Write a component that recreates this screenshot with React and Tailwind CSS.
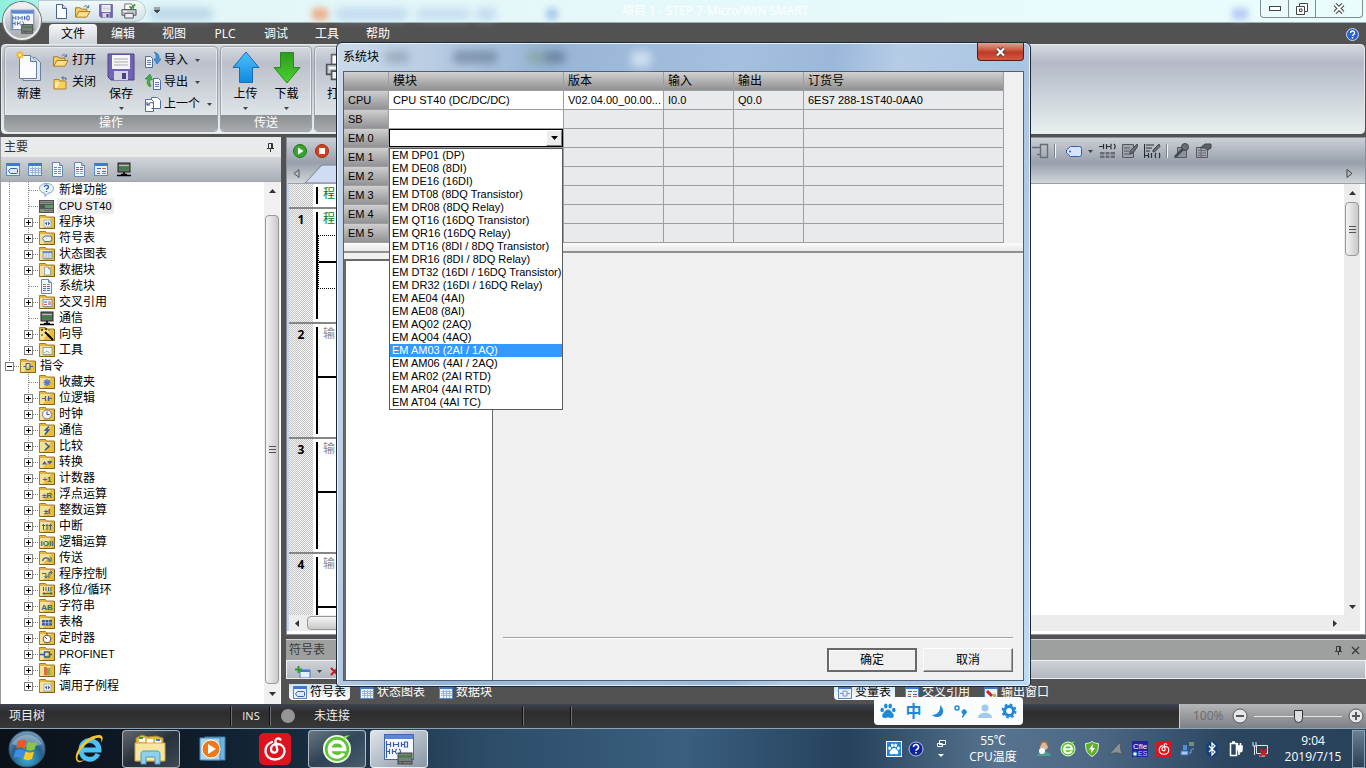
import { useState } from "react";

const uiFont = "[font-family:'Open_Sans','Noto_Sans_CJK_SC',sans-serif]";
const sansFont = "[font-family:'Liberation_Sans','Noto_Sans_CJK_SC',sans-serif]";

/* ---------- small icons ---------- */
const Svg = ({ w = 16, h = 16, box, children, className = "" }) => (
  <svg
    width={w}
    height={h}
    viewBox={box || `0 0 ${w} ${h}`}
    fill="none"
    className={`shrink-0 ${className}`}
    aria-hidden="true"
  >
    {children}
  </svg>
);

const Caret = ({ color = "#444", className }) => (
  <Svg w={5} h={3} className={className}>
    <path d="M0 0h5L2.5 3z" fill={color} />
  </Svg>
);

const SheetFrame = ({ children }) => (
  <Svg w={15} h={15} box="0 0 15 15">
    <rect x=".5" y="1.5" width="13" height="12" fill="#e9f1fb" stroke="#5c86c4" />
    <rect x="1" y="1" width="13" height="3" fill="#3f79d6" />
    {children}
  </Svg>
);

const SymbolIcon = () => (
  <SheetFrame>
    <path d="M4.5 6.5h6a1 1 0 0 1 1 1v3a1 1 0 0 1-1 1h-6L2.5 9z" fill="#dfe9fa" stroke="#3a62a8" />
  </SheetFrame>
);
const ChartIcon = () => (
  <SheetFrame>
    <path d="M2 6.5h11M2 8.5h11M2 10.5h11M4.500 5v8M7.500 5v8M10.500 5v8" stroke="#8fa9d3" strokeWidth=".8" />
  </SheetFrame>
);
const XrefIcon = () => (
  <SheetFrame>
    <path d="M3 6.500h4M8 9.500h4M3 11.500h3" stroke="#3b64c4" strokeWidth="1.200" />
    <path d="M8 6.500h4M3 9.500h3M8 11.500h4" stroke="#d9703c" strokeWidth="1.200" />
  </SheetFrame>
);
const PageIcon = ({ a = "#6f87b5", b = "#6f87b5", c = "#6f87b5" }) => (
  <Svg w={15} h={15}>
    <path d="M2.500.5h7l3 3v11h-10z" fill="#f4f8fe" stroke="#6e86ae" />
    <path d="M9.500.5v3h3" fill="#bccbe5" stroke="#6e86ae" />
    <path d="M4 5.500h3M8 5.500h3" stroke={a} />
    <path d="M4 7.500h3M8 7.500h3" stroke={b} />
    <path d="M4 9.500h3M8 9.500h3M4 11.500h3M8 11.500h3" stroke={c} />
  </Svg>
);
const PlcIcon = () => (
  <Svg w={16} h={15}>
    <rect x="2" y="1" width="12" height="9" fill="#6b6f6b" stroke="#222" />
    <rect x="3" y="3" width="10" height="1" fill="#b8bcb8" />
    <rect x="3" y="5" width="10" height="3" fill="#3d7f45" />
    <path d="M8 10v3M1 13.500h14M5 12.500h6" stroke="#000" strokeWidth="1.500" />
  </Svg>
);
const CpuIcon = () => (
  <Svg w={15} h={13}>
    <rect x=".5" y=".5" width="14" height="12" fill="#8d918d" stroke="#4e524e" />
    <rect x="1" y="4" width="13" height="5" fill="#4a5a4c" />
    <rect x="6" y="5" width="8" height="3" fill="#5f9a64" />
    <path d="M1 2.500h13M5 10.500h9" stroke="#6a6e6a" />
  </Svg>
);
const HelpBubble = () => (
  <Svg w={15} h={14}>
    <path d="M7.500.5c4 0 7 2 7 4.800S12 10 9 10.300L6 13.500v-3.200C3 10 .5 8 .5 5.300S3.500.5 7.500.5z" fill="#eef4fb" stroke="#7d9dc0" />
    <path d="M5.500 4a2 1.800 0 1 1 2.800 1.600c-.6.300-.8.600-.8 1.200M7.500 8v1" stroke="#2a5fb0" strokeWidth="1.400" />
  </Svg>
);

const folderGlyphs = {
  program: (
    <>
      <path d="M5 5h7v7H5z" fill="#e6ebf5" stroke="#9aa7bf" strokeWidth=".7" />
      <path d="M6 8.500h1M7.500 7v3M9.500 7v3M10 8.500h1" stroke="#47629a" />
    </>
  ),
  symbol: <path d="M5.500 5h5.200a2 2 0 0 1 2 2v1.500a2 2 0 0 1-2 2H5.500L3.500 7.800z" fill="#e9effb" stroke="#4c70b2" />,
  chart: (
    <>
      <rect x="4" y="4.500" width="9" height="7" fill="#f0f4fb" stroke="#6683b8" strokeWidth=".8" />
      <path d="M4 5.500h9" stroke="#5d8add" strokeWidth="1.500" />
      <path d="M4 8h9M4 10h9M7 6v5M10 6v5" stroke="#9db4d8" strokeWidth=".7" />
    </>
  ),
  data: <path d="M5.500 4h4l2 2v6h-6zM9.500 4v2h2" fill="#f0f3f8" stroke="#8b97ae" strokeWidth=".8" />,
  xref: (
    <>
      <rect x="4" y="4.500" width="9" height="7" fill="#eef1fb" stroke="#6683b8" strokeWidth=".8" />
      <path d="M5 7h3M9 9h3" stroke="#3b64c4" />
      <path d="M9 7h3M5 9.500h3" stroke="#d9605c" />
    </>
  ),
  tools: (
    <>
      <rect x="4" y="4.500" width="9" height="7" fill="#f2f7fa" stroke="#7a93a4" strokeWidth=".8" />
      <path d="M5 10l3-2 3 2" stroke="#9ab0bd" />
    </>
  ),
  wand: (
    <>
      <path d="M6 5l8 8" stroke="#000" strokeWidth="2" />
      <path d="M3 2v2M2 3h2M7 1v2M6 2h2M3 7v2M10 3v1" stroke="#000" strokeWidth=".8" />
    </>
  ),
  box: <path d="M6 4.500h4v6H6zM3.500 7.500H6M10 7.500h3" stroke="#3b5fa0" />,
  star: <path d="M8 4v7M4.500 7.500h7M5.500 5l5 5M10.500 5l-5 5" stroke="#4f76d8" strokeWidth="1.300" />,
  bit: <path d="M3 7.500h3M6.500 5v5M9.500 5v5M10 7.500h3" stroke="#3b5fa0" strokeWidth="1.200" />,
  clock: (
    <>
      <circle cx="8" cy="7.500" r="4.500" fill="#f2f2fa" stroke="#77779c" />
      <path d="M8 4.500v3h2.500" stroke="#4a4a78" />
    </>
  ),
  bolt: <path d="M10 3.500L6.500 7h3L6 11.500" stroke="#2f5aa6" strokeWidth="1.600" />,
  compare: <path d="M6 4l4 3.500L6 11" stroke="#2f5aa6" strokeWidth="1.500" />,
  convert: <path d="M3 9.500L5.500 6 8 9.500zM8 6h5.500L10.700 9.500z" fill="#3b5fa0" />,
  interrupt: <path d="M4.500 11V5M3 6.500h3M8 11V5M6.500 6.500h3M11.500 11V5M10 6.500h3" stroke="#3b5fa0" />,
  move: <path d="M3.500 10c1-4 5-4 7-1M12 6.500v3.500H8.500" stroke="#3b5fa0" strokeWidth="1.200" />,
  flow: <path d="M3 6.500h4v4M5.500 9L7 11l1.500-2M10 11V5.500h3M11.500 3.500L13 5.500l-1.500 2" stroke="#3b5fa0" />,
  shift: <path d="M4.500 4v4M7 4v4M9.500 4v4M12 4v4M4 10.500h9M5.500 9L4 10.500 5.500 12M11.500 9l1.500 1.500-1.500 1.500" stroke="#3b5fa0" />,
  table: (
    <>
      <rect x="3" y="5" width="10" height="5.500" fill="#36589a" />
      <path d="M3 7.700h10M6.300 5v5.500M9.700 5v5.500" stroke="#b9c6e0" strokeWidth=".8" />
    </>
  ),
  timer: (
    <>
      <circle cx="8" cy="8" r="3.800" fill="#fff" stroke="#555" />
      <path d="M8 8L6 6M7 3h2" stroke="#b22" />
    </>
  ),
  net: <path d="M1 7.500h4M5.500 5h5v5h-5zM10.500 7.500H13" stroke="#2f5aa6" strokeWidth="1.300" />,
  books: (
    <>
      <path d="M5 4h3v8H5z" fill="#d9704c" />
      <path d="M8 5h3v7H8z" fill="#7fae5a" />
      <path d="M11 4h2v8h-2z" fill="#d9b24c" />
    </>
  ),
};

const FolderIcon = ({ glyph, label }) => (
  <Svg w={16} h={14} box="0 0 16 14">
    <path d="M.5 2.500V.5h6L7.500 2h8v11.500H.5z" fill="#e2b83c" stroke="#a07e28" />
    <path d="M1 3h14v10H1z" fill="#e8bd3a" />
    <path d="M1 3h11L4 13H1z" fill="#f5e296" />
    <path d="M15.500 2.500v11H.5" stroke="#7d6218" />
    {glyph && folderGlyphs[glyph]}
    {label && (
      <text x="8" y="11" textAnchor="middle" fontSize="8" fontWeight="700" fill="#3b5fa0" fontFamily="Liberation Sans">
        {label}
      </text>
    )}
  </Svg>
);

const StepIcon = ({ size = 32 }) => (
  <Svg w={size} h={size} box="0 0 32 32">
    <rect x="1.500" y="1.500" width="29" height="25" fill="#f4f7fd" stroke="#4567a8" />
    <rect x="2" y="2" width="28" height="4" fill="#5b86d8" />
    <path d="M3.500 8v17M3 11.500h4M7.500 9v5M10.500 9v5M11 11.500h4M15.500 9v5M18.500 9v5M19 11.500h2M21.500 9h3v5h-3zM3 18.500h3M6.500 16v5M9.500 16v5M10 18.500h2M14 16c-2 1-2 4 0 5M16 16c2 1 2 4 0 5" stroke="#3a5ea6" strokeWidth="1.200" />
    <rect x="15" y="20" width="14" height="11" fill="#7c807c" stroke="#3f423f" />
    <path d="M16 23.500h12" stroke="#3d7f45" strokeWidth="2" />
    <path d="M16 28.500h12M19.500 28v3" stroke="#4d504d" />
  </Svg>
);

const NewDocIcon = () => (
  <Svg w={12} h={15}>
    <path d="M1.500.5h6l4 4v10h-10z" fill="#fff" stroke="#47618c" />
    <path d="M7.500.5v4h4" fill="#c4d4ea" stroke="#47618c" />
  </Svg>
);
const OpenIcon = () => (
  <Svg w={16} h={15} box="0 0 17 15">
    <path d="M.5 13.500v-10h5l1 1.500h6v3" fill="#f3cf6b" stroke="#a8761c" />
    <path d="M1 13.500L4 7.500h12l-3.500 6z" fill="#ffe08a" stroke="#a8761c" />
    <path d="M9 3c2-2.500 4-2 5 0M14.500.8V3.500H12" stroke="#4a6a9c" />
  </Svg>
);
const CloseFolderIcon = () => (
  <Svg w={16} h={15}>
    <path d="M1 4.500h5L7 6h6v8H1z" fill="#f6cf5c" stroke="#b5831f" />
    <path d="M2 7h5l-3 6H2z" fill="#fce9a8" />
    <path d="M13 5V3H9M10.500 1.200L8.700 3l1.800 1.700" stroke="#44619a" />
  </Svg>
);
const SaveIcon = ({ size = 14 }) => (
  <Svg w={size} h={size} box="0 0 28 28">
    <path d="M1 1h26v26H4l-3-3z" fill="#7264b4" stroke="#4a3f88" />
    <rect x="5" y="2" width="18" height="14" fill="#f6f6f6" />
    <path d="M7 6h14M7 9h14M7 12h14" stroke="#aaa" />
    <rect x="7" y="18" width="14" height="9" fill="#d5d5dc" />
    <rect x="15" y="20" width="4" height="6" fill="#4a3f88" />
  </Svg>
);
const PrintIcon = ({ size = 17 }) => (
  <Svg w={size} h={size} box="0 0 17 17">
    <path d="M4 1h7l2 3v3H4z" fill="#fff" stroke="#667" />
    <path d="M1 7h15v6H1z" fill="#c3c6cb" stroke="#4d5258" />
    <path d="M4 11h9v5H4z" fill="#eef0f3" stroke="#4d5258" />
    <path d="M2.500 9h4" stroke="#fff" />
    <path d="M9 3.500l2 2 4-4" stroke="#3a9a2c" strokeWidth="2" />
  </Svg>
);
const BigNewIcon = () => (
  <Svg w={26} h={32}>
    <path d="M7 6.500h12l5.500 5v18H7z" fill="#dfe8f3" stroke="#6b7f9c" />
    <path d="M3.500 4.500h11l6 6v17h-17z" fill="#fbfcfe" stroke="#6b7f9c" />
    <path d="M14.500 4.500v6h6" fill="#c9d7e8" stroke="#6b7f9c" />
    <path d="M4 0v8M0 4h8M1 1l6 6M7 1L1 7" stroke="#f2b21a" strokeWidth="1.300" />
    <circle cx="4" cy="4" r="1.500" fill="#fff6b0" />
  </Svg>
);
const ImportIcon = ({ out }) => (
  <Svg w={16} h={16}>
    <g transform={out ? "translate(8 4)" : "translate(0 4)"}>
      <path d="M.5.5h5l2 2v9h-7z" fill="#f5f8fd" stroke="#50709f" />
      <path d="M2 4.500h4M2 6.500h4M2 8.500h4" stroke="#5d80b4" />
    </g>
    {out ? (
      <path d="M5 13C2 11 1.500 8 3 5H0l5-5 2.500 6-2-.500c-1 2-1 4 .500 6z" fill="#3fb04e" stroke="#2a7f38" strokeWidth=".6" />
    ) : (
      <path d="M9 0c4 1 5.500 3 5 7h2l-4 5-3-5h2c.500-3 0-5-2-7z" fill="#3b94d8" stroke="#1f66a8" strokeWidth=".6" />
    )}
  </Svg>
);
const PrevIcon = () => (
  <Svg w={16} h={16}>
    <path d="M6.500 1.500h6l3 3v8h-9z" fill="#fff" stroke="#50709f" />
    <path d="M.5 3.500h6l2 2v10h-8z" fill="#fff" stroke="#50709f" />
    <path d="M8 7C6 6 4 7 2 9M2 6v3h3M6.500 12.500h2" stroke="#264a80" />
  </Svg>
);
const UpArrow = () => (
  <Svg w={28} h={33}>
    <defs>
      <linearGradient id="up" x1="0" y1="0" x2="0" y2="1">
        <stop offset="0" stopColor="#4cc0fa" />
        <stop offset="1" stopColor="#1189e0" />
      </linearGradient>
    </defs>
    <path d="M14 1l13 15.500h-6.500v15h-13v-15H1z" fill="url(#up)" stroke="#1b6cb0" />
  </Svg>
);
const DownArrow = () => (
  <Svg w={28} h={33}>
    <defs>
      <linearGradient id="down" x1="0" y1="0" x2="0" y2="1">
        <stop offset="0" stopColor="#2f9a20" />
        <stop offset="1" stopColor="#48d42e" />
      </linearGradient>
    </defs>
    <path d="M14 32L1 16.500h6.500v-15h13v15H27z" fill="url(#down)" stroke="#2a8a1c" />
  </Svg>
);
const PinIcon = ({ color = "#333" }) => (
  <Svg w={7} h={9}>
    <path d="M1.500 5V.5h4V5M0 5.500h7M3.500 6v3M4.500 1v4" stroke={color} />
  </Svg>
);
const PawIcon = ({ color = "#2088d8", size = 16 }) => (
  <Svg w={size} h={size} box="0 0 16 16">
    <g fill={color}>
      <ellipse cx="2.200" cy="7" rx="1.800" ry="2.300" />
      <ellipse cx="5.800" cy="3" rx="1.800" ry="2.500" />
      <ellipse cx="10.200" cy="3" rx="1.800" ry="2.500" />
      <ellipse cx="13.800" cy="7" rx="1.800" ry="2.300" />
      <path d="M8 6.500c2.500 0 3 2 4.500 3.500 2.200 2 1.500 5-1 5-1.500 0-2-.500-3.500-.500S6 15 4.500 15c-2.500 0-3.200-3-1-5C5 8.500 5.500 6.500 8 6.500z" />
    </g>
  </Svg>
);

/* ---------- title bar and ribbon ---------- */
function TitleBar() {
  return (
    <header className="relative flex h-[23px] shrink-0 items-start justify-center border-b border-[#9fb0b4] bg-linear-to-r from-[#8ff0dc] via-[#e2f6f8] via-10% to-[#eafcfc]">
      <span className="absolute top-2 left-[150px] h-3 w-[62px] rounded bg-[#9fc0dc]/60 blur-[4px]" />
      <span className="absolute top-2 left-[312px] h-3 w-4 rounded bg-[#ef9d70]/80 blur-[3px]" />
      <span className="absolute top-2 left-[336px] h-3 w-[72px] rounded bg-[#aac6ea]/60 blur-[4px]" />
      <span className="absolute top-2 left-[416px] h-3 w-[54px] rounded bg-[#aac6ea]/50 blur-[4px]" />
      <span className="absolute top-2 left-[476px] h-3 w-5 rounded bg-[#aac6ea]/60 blur-[4px]" />
      <span className="absolute top-2 left-[546px] h-3 w-3 rounded bg-[#8fb8e4]/70 blur-[3px]" />
      <span className="absolute top-2 right-[118px] h-3 w-4 rounded bg-[#a9c0f4]/80 blur-[3px]" />

      {/* Quick access */}
      <div className="absolute top-0 left-[38px] flex h-[22px] items-center gap-2 rounded-r-full border border-[#b4cdd2] bg-linear-to-b from-[#f2f8f8] to-[#d4e2e6] pr-2 pl-4">
        <button aria-label="新建"><NewDocIcon /></button>
        <button aria-label="打开"><OpenIcon /></button>
        <button aria-label="保存"><SaveIcon /></button>
        <button aria-label="打印"><PrintIcon size={16} /></button>
      </div>
      <Svg w={7} h={7} className="absolute top-[7px] left-[154px]">
        <path d="M0 1h6M0 3h6L3 6z" stroke="#444" fill="#444" strokeWidth=".8" />
      </Svg>
      <h1 className="ml-16 text-[12px] leading-[22px] text-white">项目 1 - STEP 7-Micro/WIN SMART</h1>

      <div className="absolute top-0 right-[3px] flex h-[18px] rounded-b border border-t-0 border-[#7f8c90]">
        <button aria-label="最小化" className="flex w-7 items-center justify-center border-r border-[#7f8c90]">
          <Svg w={12} h={5}><rect x=".5" y=".5" width="11" height="4" fill="#fff" stroke="#444" /></Svg>
        </button>
        <button aria-label="还原" className="flex w-[27px] items-center justify-center border-r border-[#7f8c90]">
          <Svg w={12} h={12}>
            <path d="M3.500.5h8v8h-3v3h-8v-8h3z" fill="#fff" stroke="#444" />
            <path d="M3.500 3.500h5v5M3.500 6h2.500v2.500H3.500z" stroke="#444" />
          </Svg>
        </button>
        <button aria-label="关闭" className="flex w-[46px] items-center justify-center">
          <Svg w={12} h={11}>
            <path d="M2 1.500l8 8M10 1.500l-8 8" stroke="#444" strokeWidth="4" />
            <path d="M2 1.500l8 8M10 1.500l-8 8" stroke="#fff" strokeWidth="2" />
          </Svg>
        </button>
      </div>
    </header>
  );
}

const menus = ["文件", "编辑", "视图", "PLC", "调试", "工具", "帮助"];

function MenuBar() {
  return (
    <nav className="flex h-[21px] shrink-0 items-end bg-[#525252] pl-[49px] text-[12px] leading-5 text-white">
      {menus.map((m, i) => (
        <button
          key={m}
          className={`h-5 shrink-0 ${
            i === 0
              ? "w-12 rounded-t bg-linear-to-b from-[#f4f8f8] to-[#cfd3da] text-black"
              : "ml-px w-[50px]"
          }`}
        >
          {m}
        </button>
      ))}
      <button aria-label="帮助主题" className="mr-[7px] mb-[3px] ml-auto">
        <Svg w={13} h={13}>
          <circle cx="6.500" cy="6.500" r="6" fill="#2b62d0" stroke="#c9dcfa" />
          <path d="M4.500 5a2 2 0 1 1 2.800 1.800c-.600.300-.800.500-.800 1.200M6.500 9v1.500" stroke="#fff" strokeWidth="1.400" />
        </Svg>
      </button>
    </nav>
  );
}

const SmallCmd = ({ icon, label, arrow }) => (
  <button className="flex h-[22px] items-center gap-[3px] text-[12px] leading-[22px]">
    {icon}
    <span>{label}</span>
    {arrow && <Caret className="ml-1" />}
  </button>
);

const BigCmd = ({ icon, label, arrow, width }) => (
  <button className={`flex flex-col items-center text-[12px] ${width}`}>
    <span className="flex h-9 items-center">{icon}</span>
    <span className="leading-[18px]">{label}</span>
    {arrow && <Caret className="mt-1" />}
  </button>
);

const Group = ({ title, children, className }) => (
  <section
    className={`flex h-[86px] shrink-0 flex-col overflow-hidden rounded border border-[#9da1a8] bg-white/10 shadow-[inset_0_0_0_1px_rgba(255,255,255,0.5)] ${className}`}
  >
    <div className="flex min-h-0 flex-1 pt-0.5">{children}</div>
    <h2 className="h-4 shrink-0 bg-linear-to-b from-[#8c8f91] to-[#a9acae] text-center text-[12px] leading-4 text-white">
      {title}
    </h2>
  </section>
);

function Ribbon() {
  return (
    <div className="shrink-0 bg-[#525252] px-px pb-[3px]">
      <div className="flex h-[90px] gap-0.5 rounded border border-[#e5e8ea] bg-linear-to-b from-[#d5d8df] via-[#b4b9c5] via-20% to-[#e8f0f0] px-0.5 pt-px">
        <Group title="操作" className="w-[214px]">
          <BigCmd icon={<BigNewIcon />} label="新建" width="w-12" />
          <div className="w-[54px]">
            <SmallCmd icon={<OpenIcon />} label="打开" />
            <SmallCmd icon={<CloseFolderIcon />} label="关闭" />
          </div>
          <BigCmd icon={<SaveIcon size={28} />} label="保存" arrow width="w-7" />
          <div className="ml-[10px]">
            <SmallCmd icon={<ImportIcon />} label="导入" arrow />
            <SmallCmd icon={<ImportIcon out />} label="导出" arrow />
            <SmallCmd icon={<PrevIcon />} label="上一个" arrow />
          </div>
        </Group>
        <Group title="传送" className="w-[92px]">
          <BigCmd icon={<UpArrow />} label="上传" arrow width="ml-1 w-[41px]" />
          <BigCmd icon={<DownArrow />} label="下载" arrow width="w-[41px]" />
        </Group>
        <Group title="打印" className="w-[140px]">
          <BigCmd icon={<PrintIcon size={28} />} label="打印" width="w-12" />
        </Group>
      </div>
    </div>
  );
}

/* ---------- project tree ---------- */
const treeItems = [
  { name: "新增功能", icon: <HelpBubble />, leaf: true },
  { name: "CPU ST40", icon: <CpuIcon />, leaf: true, selected: true },
  { name: "程序块", icon: <FolderIcon glyph="program" /> },
  { name: "符号表", icon: <FolderIcon glyph="symbol" /> },
  { name: "状态图表", icon: <FolderIcon glyph="chart" /> },
  { name: "数据块", icon: <FolderIcon glyph="data" /> },
  { name: "系统块", icon: <PageIcon b="#c04444" c="#4a6cc0" />, leaf: true },
  { name: "交叉引用", icon: <FolderIcon glyph="xref" /> },
  { name: "通信", icon: <PlcIcon />, leaf: true },
  { name: "向导", icon: <FolderIcon glyph="wand" /> },
  { name: "工具", icon: <FolderIcon glyph="tools" /> },
  { name: "指令", icon: <FolderIcon glyph="box" />, root: true },
  { name: "收藏夹", icon: <FolderIcon glyph="star" />, leaf: true },
  { name: "位逻辑", icon: <FolderIcon glyph="bit" /> },
  { name: "时钟", icon: <FolderIcon glyph="clock" /> },
  { name: "通信", icon: <FolderIcon glyph="bolt" /> },
  { name: "比较", icon: <FolderIcon glyph="compare" /> },
  { name: "转换", icon: <FolderIcon glyph="convert" /> },
  { name: "计数器", icon: <FolderIcon label="+1" /> },
  { name: "浮点运算", icon: <FolderIcon label="±R" /> },
  { name: "整数运算", icon: <FolderIcon label="±I" /> },
  { name: "中断", icon: <FolderIcon glyph="interrupt" /> },
  { name: "逻辑运算", icon: <FolderIcon label="IOII" /> },
  { name: "传送", icon: <FolderIcon glyph="move" /> },
  { name: "程序控制", icon: <FolderIcon glyph="flow" /> },
  { name: "移位/循环", icon: <FolderIcon glyph="shift" /> },
  { name: "字符串", icon: <FolderIcon label="AB" /> },
  { name: "表格", icon: <FolderIcon glyph="table" /> },
  { name: "定时器", icon: <FolderIcon glyph="timer" /> },
  { name: "PROFINET", icon: <FolderIcon glyph="net" /> },
  { name: "库", icon: <FolderIcon glyph="books" /> },
  { name: "调用子例程", icon: <FolderIcon glyph="program" /> },
];

const rootIndex = treeItems.findIndex((t) => t.root);

function TreeLines({ item, index }) {
  const x = item.root ? 9.5 : 28.5;
  const last = index === rootIndex - 1 || index === treeItems.length - 1;
  return (
    <Svg w={item.root ? 20 : 39} h={16}>
      <g stroke="#808080" strokeDasharray="1 1">
        {index < rootIndex && <path d="M9.500 0v16" />}
        {item.root && <path d="M9.500 0v8" />}
        {!item.root && <path d={last ? "M28.500 0v8" : "M28.500 0v16"} />}
        <path d={item.root ? "M10 8.500h10" : "M29 8.500h10"} />
      </g>
      {!item.leaf && (
        <>
          <rect x={x - 4} y="4.500" width="8" height="8" fill="#fff" stroke="#808080" />
          <path d={`M${x - 2.5} 8.500h5`} stroke="#000" />
          {!item.root && <path d="M28.500 6v5" stroke="#000" />}
        </>
      )}
    </Svg>
  );
}

const ArrowUp = () => (
  <Svg w={7} h={4}><path d="M0 4h7L3.500 0z" fill="#333" /></Svg>
);
const ArrowDown = () => (
  <Svg w={7} h={4}><path d="M0 0h7L3.500 4z" fill="#333" /></Svg>
);
const Grip = () => (
  <Svg w={7} h={9}><path d="M0 1.500h7M0 4.500h7M0 7.500h7" stroke="#555" /></Svg>
);

function ProjectTree() {
  return (
    <aside className="flex w-[281px] shrink-0 flex-col border-l border-[#9a9a9a] bg-white">
      <div className="flex h-5 items-center justify-between bg-[#e9eaeb] pr-[7px] pl-[3px] text-[12px] text-[#333]">
        <h2>主要</h2>
        <button aria-label="自动隐藏"><PinIcon /></button>
      </div>
      <div className="flex h-[25px] items-center gap-[7px] border-b border-[#a3a7ad] bg-linear-to-b from-[#d2d5da] to-[#a9afb8] pl-[5px]">
        <button aria-label="符号表"><SymbolIcon /></button>
        <button aria-label="状态图表"><ChartIcon /></button>
        <button aria-label="数据块"><PageIcon /></button>
        <button aria-label="系统块"><PageIcon a="#3a9a4a" b="#d03030" c="#e09030" /></button>
        <button aria-label="交叉引用"><XrefIcon /></button>
        <button aria-label="通信"><PlcIcon /></button>
      </div>
      <div className="flex min-h-0 flex-1">
        <ul className="-ml-px min-w-0 flex-1 overflow-hidden text-[12px] leading-4">
          {treeItems.map((item, i) => (
            <li key={i} className="flex h-4 items-center">
              <TreeLines item={item} index={i} />
              <span className="flex w-[18px] shrink-0">{item.icon}</span>
              <a
                href="#tree"
                className={`px-0.5 whitespace-nowrap ${item.selected ? "bg-[#efefef]" : ""} ${
                  /^[A-Z]/.test(item.name) ? `${sansFont} text-[11px]` : ""
                }`}
              >
                {item.name}
              </a>
            </li>
          ))}
        </ul>
        <div className="mr-px flex w-4 flex-col items-center bg-[#f0f0f0]">
          <span className="flex h-[33px] items-start pt-[7px]"><ArrowUp /></span>
          <span className="flex w-[14px] flex-1 items-center justify-center rounded-sm border border-[#979797] bg-linear-to-r from-[#f4f4f4] to-[#c9c9cb]">
            <Grip />
          </span>
          <span className="flex h-5 items-center"><ArrowDown /></span>
        </div>
      </div>
    </aside>
  );
}

/* ---------- ladder editor ---------- */
const networks = [
  { no: "", text: "程", color: "text-[#0a7a1a]", size: "h-[25px]" },
  { no: "1", text: "程", color: "text-[#0a7a1a]", size: "h-[115px]", rung: true, box: true },
  { no: "2", text: "输", color: "text-[#8a8a8a]", size: "h-[115px]", rung: true },
  { no: "3", text: "输", color: "text-[#8a8a8a]", size: "h-[115px]", rung: true },
  { no: "4", text: "输", color: "text-[#8a8a8a]", size: "flex-1", rung: true },
];

const Sep = () => <span className="h-[14px] w-px bg-[#f3f5f7] shadow-[-1px_0_0_#7c828a]" />;

function EditorToolbar() {
  return (
    <div className="flex h-[45px] shrink-0 flex-col bg-linear-to-b from-[#cdd0d6] via-[#98a0ab] via-55% to-[#d2d5d9]">
      <div className="flex h-[26px] items-center pl-1.5">
        <button aria-label="运行" className="mr-2">
          <Svg w={14} h={14}>
            <circle cx="7" cy="7" r="6.500" fill="#36a62c" stroke="#1f7a1a" />
            <path d="M5 3.500l5.500 3.500L5 10.500z" fill="#fff" />
          </Svg>
        </button>
        <button aria-label="停止">
          <Svg w={14} h={14}>
            <circle cx="7" cy="7" r="6.500" fill="#d8401c" stroke="#a22a10" />
            <rect x="4" y="4" width="6" height="6" fill="#fff" />
          </Svg>
        </button>
        <div className="mr-[153px] ml-auto flex items-center gap-[6px]">
          <Svg w={17} h={16}>
            <path d="M0 4.500h8M5 11.500h3M8.500 1.500h7v13h-7z" stroke="#6a6e74" strokeWidth="1.400" />
          </Svg>
          <Sep />
          <Svg w={16} h={11} className="ml-1">
            <path d="M4.500.5h9a2 2 0 0 1 2 2v6a2 2 0 0 1-2 2h-9L.500 7V4z" fill="#d5e4fb" stroke="#3560b4" />
            <circle cx="4" cy="5.500" r="1" fill="#3560b4" />
          </Svg>
          <Caret />
          <Svg w={17} h={16}>
            <path d="M0 3.500h4M4.500 1v5M7.500 1v5M8 3.500h3M12.500 1c-1 1-1 4 0 5M15 1c1.500 1 1.500 4 0 5" stroke="#2a2d32" strokeWidth="1.200" />
            <path d="M1 9h15v6H1z" fill="#6a6e74" />
            <path d="M1 12h15M6 9v6M11 9v6" stroke="#aeb3ba" />
          </Svg>
          <Svg w={16} h={16}>
            <path d="M.5 1.500h11v13H.5z" fill="#a1a5ab" stroke="#55595f" />
            <path d="M2 5h6M2 8h5M2 11h7" stroke="#55595f" />
            <path d="M15 1L8 8v3l3-1 5-7z" fill="#6a6e74" stroke="#44484e" />
          </Svg>
          <Svg w={17} h={16}>
            <path d="M.5 1v14M2 2h8M2 5h6M2 8h4M1 12.500h3M4.500 10v5M7.500 10v5M12 10c-1 1-1 4 0 5M15 10c1 1 1 4 0 5" stroke="#2a2d32" strokeWidth="1.200" />
            <path d="M15 1L9 7v2l2-.500 5-5z" fill="#6a6e74" stroke="#44484e" />
          </Svg>
          <Sep />
          <Svg w={16} h={16}>
            <path d="M3.500 4.500h9v10h-12l3-3z" fill="#8e9299" stroke="#55595f" />
            <circle cx="11" cy="4" r="3.500" fill="#6a6e74" stroke="#44484e" />
            <path d="M9 6l-8 8" stroke="#44484e" strokeWidth="2.500" />
          </Svg>
          <Svg w={16} h={16}>
            <path d="M.5 4.500h11v10H.5z" fill="#a1a5ab" stroke="#55595f" />
            <path d="M2 7.500h8M2 10h8M2 12.500h8M5 6v8" stroke="#6a6e74" />
            <path d="M4 5l5-4h6v4l-3 2-3-2z" fill="#5d6167" stroke="#44484e" />
          </Svg>
        </div>
      </div>
      <div className="flex flex-1 items-center pl-[6px]">
        <Svg w={7} h={9}><path d="M6 .500v8L1 4.500z" stroke="#555" /></Svg>
        <Svg w={60} h={19} className="ml-[5px]">
          <path d="M0 19L17 1h43v18z" fill="#cfdcf3" stroke="#77818f" />
        </Svg>
        <Svg w={7} h={9} className="mr-3 ml-auto"><path d="M1 .500v8l5-4z" stroke="#444" /></Svg>
      </div>
    </div>
  );
}

function Editor() {
  return (
    <section className="flex min-h-0 flex-1 flex-col border border-[#8a9099] bg-white">
      <EditorToolbar />
      <div className="flex min-h-0 flex-1 border-t border-l-2 border-t-[#9aa0a8] border-l-[#c3d5ee]">
        <div className="flex min-w-0 flex-1 flex-col">
          <div className="flex min-h-0 flex-1 flex-col overflow-hidden">
            {networks.map((n, i) => (
              <div key={i} className={`flex w-[200px] shrink-0 ${n.size} ${i < 4 ? "border-b-2 border-[#868686]" : ""}`}>
                <div className="w-6 bg-[repeating-conic-gradient(#c4c4c4_0_25%,#f4f4f4_0_50%)] bg-[length:2px_2px] pt-[3px] text-center text-[12px] leading-4 font-bold text-black [font-family:'Open_Sans',sans-serif]">
                  {n.no}
                </div>
                <div className="my-[3px] ml-[3px] w-[2px] bg-black" />
                <div className="flex flex-1 flex-col">
                  <p className={`pl-[5px] text-[12px] leading-5 ${n.color}`}>{n.text}</p>
                  {n.rung && (
                    <div className={`mt-[6px] flex h-[54px] shrink-0 items-center ${n.box ? "border border-dotted border-black" : ""}`}>
                      <span className="h-[2px] w-full bg-black" />
                    </div>
                  )}
                </div>
              </div>
            ))}
          </div>
          <div className="flex h-4 shrink-0 items-center justify-between bg-[#ececec] pl-[6px]">
            <Svg w={4} h={7}><path d="M4 0v7L0 3.500z" fill="#333" /></Svg>
            <span className="ml-2 h-[14px] w-[300px] rounded-sm border border-[#979797] bg-linear-to-b from-[#f4f4f4] to-[#c9c9cb]" />
            <Svg w={4} h={7} className="mr-[7px] ml-auto"><path d="M0 0v7l4-3.500z" fill="#333" /></Svg>
          </div>
        </div>
        <div className="flex w-4 shrink-0 flex-col items-center bg-[#ececec]">
          <span className="flex h-[18px] items-center"><ArrowUp /></span>
          <span className="flex h-[54px] w-[14px] items-center justify-center rounded-sm border border-[#979797] bg-linear-to-r from-[#f4f4f4] to-[#c9c9cb]">
            <Grip />
          </span>
          <span className="mt-auto mb-[22px]"><ArrowDown /></span>
        </div>
        <div className="w-[5px] bg-white" />
      </div>
      <div className="h-[3px] shrink-0 bg-white" />
    </section>
  );
}

const Tab = ({ icon, label, active }) => (
  <button
    className={`flex h-4 items-center gap-0.5 px-1 text-[12px] leading-4 ${
      active ? "rounded-b bg-linear-to-b from-[#cfe0ec] to-white text-black" : "text-white"
    }`}
  >
    {icon}
    {label}
  </button>
);

const DockPanel = ({ title, className, tabs, children }) => (
  <section className={`flex flex-col ${className}`}>
    <div className="flex h-[21px] items-center justify-between border-t border-[#d0d2d2] bg-[#9e9f9f] pr-[6px] pl-[3px] text-[12px] text-[#3c3c3c]">
      <h2>{title}</h2>
      <div className="flex items-center gap-[9px]">
        <button aria-label="自动隐藏"><PinIcon color="#3a3a3a" /></button>
        <button aria-label="关闭面板">
          <Svg w={9} h={9}><path d="M1 1l7 7M8 1L1 8" stroke="#3a3a3a" strokeWidth="1.300" /></Svg>
        </button>
      </div>
    </div>
    <div className="flex h-[19px] items-center border border-[#eceff1] bg-linear-to-b from-[#ced2d6] to-[#b3b8c1] px-2 pt-1">
      {children}
    </div>
    <div className="flex h-[25px] items-start gap-[6px] pt-[5px] pl-[3px]">{tabs}</div>
  </section>
);

function BottomPanels() {
  return (
    <div className="mt-1 flex shrink-0">
      <DockPanel
        title="符号表"
        className="w-[545px]"
        tabs={
          <>
            <Tab active icon={<SymbolIcon />} label="符号表" />
            <Tab icon={<ChartIcon />} label="状态图表" />
            <Tab icon={<ChartIcon />} label="数据块" />
          </>
        }
      >
        <Svg w={16} h={12}>
          <path d="M5 4h10v8H5z" fill="#e3edfb" stroke="#4c78c4" />
          <path d="M5 5h10" stroke="#3f79d6" strokeWidth="2" />
          <path d="M3.500 0v7M0 3.500h7" stroke="#2f9a2c" strokeWidth="2" />
        </Svg>
        <Caret className="ml-[6px]" />
        <Svg w={9} h={9} className="ml-2"><path d="M1 1l7 7M8 1L1 8" stroke="#c81818" strokeWidth="2" /></Svg>
      </DockPanel>
      <DockPanel
        className="flex-1"
        tabs={
          <>
            <Tab active icon={<SheetFrame><path d="M5 6h4v5H5zM2 8.500h3M9 8.500h3" stroke="#8090b0" /></SheetFrame>} label="变量表" />
            <Tab icon={<XrefIcon />} label="交叉引用" />
            <Tab icon={<SheetFrame><path d="M3 6l5 5" stroke="#c22" strokeWidth="3" /><path d="M9 11l3-1" stroke="#e0a020" strokeWidth="3" /></SheetFrame>} label="输出窗口" />
          </>
        }
      />
    </div>
  );
}

/* ---------- system block dialog ---------- */
const modules = [
  "EM DP01 (DP)",
  "EM DE08 (8DI)",
  "EM DE16 (16DI)",
  "EM DT08 (8DQ Transistor)",
  "EM DR08 (8DQ Relay)",
  "EM QT16 (16DQ Transistor)",
  "EM QR16 (16DQ Relay)",
  "EM DT16 (8DI / 8DQ Transistor)",
  "EM DR16 (8DI / 8DQ Relay)",
  "EM DT32 (16DI / 16DQ Transistor)",
  "EM DR32 (16DI / 16DQ Relay)",
  "EM AE04 (4AI)",
  "EM AE08 (8AI)",
  "EM AQ02 (2AQ)",
  "EM AQ04 (4AQ)",
  "EM AM03 (2AI / 1AQ)",
  "EM AM06 (4AI / 2AQ)",
  "EM AR02 (2AI RTD)",
  "EM AR04 (4AI RTD)",
  "EM AT04 (4AI TC)",
];

const slots = ["CPU", "SB", "EM 0", "EM 1", "EM 2", "EM 3", "EM 4", "EM 5"];
const cpuCells = ["V02.04.00_00.00...", "I0.0", "Q0.0", "6ES7 288-1ST40-0AA0"];

function ModulePicker() {
  const [hover, setHover] = useState(15);
  return (
    <div className="relative h-[18px]">
      <div className="flex h-[18px] border border-black bg-white">
        <select aria-label="EM 0 模块" className="w-full appearance-none bg-transparent outline-none">
          <option value=""></option>
          {modules.map((m) => (
            <option key={m}>{m}</option>
          ))}
        </select>
        <span className="pointer-events-none flex w-4 shrink-0 items-center justify-center border border-t-white border-r-[#808080] border-b-[#808080] border-l-white bg-[#ececec]">
          <Svg w={7} h={4}><path d="M0 0h7L3.500 4z" fill="#000" /></Svg>
        </span>
      </div>
      <ul role="listbox" className="absolute top-[19px] left-0 z-10 w-[174px] border border-[#5a5a5a] bg-white">
        {modules.map((m, i) => (
          <li
            key={m}
            role="option"
            aria-selected={i === hover}
            onMouseEnter={() => setHover(i)}
            className={`h-[13px] pl-0.5 text-[11px] leading-[13px] whitespace-nowrap ${
              i === hover ? "bg-[#3399ff] text-white" : ""
            }`}
          >
            {m}
          </li>
        ))}
      </ul>
    </div>
  );
}

function SystemBlockDialog() {
  const cell = "h-[19px] border-r border-b border-[#9c9ea1] p-0 text-left font-normal";
  return (
    <section
      role="dialog"
      aria-label="系统块"
      className="absolute top-[42px] bottom-[81px] left-[336px] z-20 flex w-[695px] flex-col rounded-t-md rounded-b border border-[#1c2836] bg-[linear-gradient(100deg,#cbdae9_0%,#b9cde3_12%,#98b5d6_26%,#a5c0de_50%,#9bb8da_62%,#b6cce6_70%,#a9c4e2_85%,#bfdcf6_100%)] px-[6px] pb-[5px] shadow-[inset_0_0_0_1px_rgba(240,250,255,0.85)]"
    >
      <header className="relative flex h-7 shrink-0 items-center text-[12px] text-black">
        <span className="absolute top-2 left-[42px] h-3 w-6 rounded bg-[#77889e]/50 blur-[4px]" />
        <span className="absolute top-2 left-[110px] h-3 w-11 rounded bg-[#5d6f88]/60 blur-[4px]" />
        <span className="absolute top-2 left-[184px] h-3 w-5 rounded bg-[#7aa08c]/60 blur-[4px]" />
        <span className="absolute top-2 left-[202px] h-3 w-5 rounded bg-[#506480]/60 blur-[4px]" />
        <span className="absolute top-2 left-[288px] h-4 w-5 rounded bg-[#d8e8f8]/80 blur-[4px]" />
        <h2 className="relative">系统块</h2>
        <button
          aria-label="关闭"
          className="absolute top-0 right-0 flex h-[18px] w-[47px] items-center justify-center rounded-b border border-t-0 border-[#5a1a14] bg-linear-to-b from-[#e0a193] via-[#bf3a25] via-55% to-[#d4583f]"
        >
          <Svg w={11} h={10}>
            <path d="M2 1.500l7 7M9 1.500l-7 7" stroke="#5a3a3a" strokeWidth="4" />
            <path d="M2 1.500l7 7M9 1.500l-7 7" stroke="#fff" strokeWidth="2.200" />
          </Svg>
        </button>
      </header>

      <div className={`flex min-h-0 flex-1 flex-col border border-[#4e6075] bg-[#f0f0f0] text-[11px] text-black ${sansFont}`}>
        <table className="w-[660px] table-fixed border-separate border-spacing-0">
          <colgroup>
            <col className="w-[45px]" />
            <col className="w-[175px]" />
            <col className="w-[100px]" />
            <col className="w-[70px]" />
            <col className="w-[70px]" />
            <col className="w-[200px]" />
          </colgroup>
          <thead>
            <tr className="bg-linear-to-b from-[#d2d2d3] to-[#8d8d8f] text-[12px]">
              {["", "模块", "版本", "输入", "输出", "订货号"].map((h) => (
                <th key={h} className={`${cell} pl-1 leading-[18px]`}>{h}</th>
              ))}
            </tr>
          </thead>
          <tbody>
            {slots.map((slot) => (
              <tr key={slot} className="leading-[18px]">
                <th className={`${cell} bg-linear-to-b from-[#cfcfd0] to-[#929294] pl-1`}>{slot}</th>
                {slot === "EM 0" ? (
                  <td className={`${cell} bg-white`}><ModulePicker /></td>
                ) : (
                  <td className={`${cell} bg-white pl-1`}>{slot === "CPU" ? "CPU ST40 (DC/DC/DC)" : ""}</td>
                )}
                {cpuCells.map((c, i) => (
                  <td
                    key={c}
                    className={`${cell} overflow-hidden pl-1 whitespace-nowrap ${
                      slot === "CPU" && i === 0 ? "bg-white" : "bg-[#e9eaec]"
                    }`}
                  >
                    {slot === "CPU" ? c : ""}
                  </td>
                ))}
              </tr>
            ))}
          </tbody>
        </table>
        <div className="h-[10px] shrink-0 border-b-2 border-[#8f8f8f] bg-linear-to-b from-[#fbfbfb] to-[#e8e8e8]" />
        <div className="flex min-h-0 flex-1 pt-[6px]">
          <div className="w-[149px] border-t-2 border-r border-l-2 border-[#696969] bg-white" />
          <div className="flex flex-1 flex-col justify-end px-[10px] pb-2">
            <div className="flex justify-end gap-[6px] border-t border-[#a0a0a0] pt-[10px] text-[12px] shadow-[inset_0_1px_0_#fff]">
              <button className="h-6 w-[90px] border-2 border-[#696969] bg-[#f0f0f0] leading-5 shadow-[inset_1px_1px_0_#fff]">
                确定
              </button>
              <button className="h-6 w-[90px] border border-t-white border-r-[#696969] border-b-[#696969] border-l-white bg-[#f0f0f0] leading-5 shadow-[inset_-1px_-1px_0_#a0a0a0]">
                取消
              </button>
            </div>
          </div>
        </div>
      </div>
    </section>
  );
}

/* ---------- status bar ---------- */
const ZoomButton = ({ plus }) => (
  <button aria-label={plus ? "放大" : "缩小"} className="shrink-0">
    <Svg w={16} h={16}>
      <circle cx="8" cy="8" r="7" fill="#e4e6e8" stroke="#55585c" />
      <path d={plus ? "M4 8h8M8 4v8" : "M4 8h8"} stroke="#55585c" strokeWidth="2" />
    </Svg>
  </button>
);

function StatusBar() {
  const bar = "h-5 w-px bg-[#6c7078] shadow-[-1px_0_0_#111]";
  return (
    <footer className="flex h-6 shrink-0 items-center bg-linear-to-b from-[#3d4350] via-[#2d2d2e] via-35% to-[#383838] text-[12px] text-[#eee]">
      <span className="w-[231px] pl-[9px]">项目树</span>
      <span className={bar} />
      <span className="w-[38px] text-center text-[11px]">INS</span>
      <span className={bar} />
      <span className="ml-[10px] size-[14px] rounded-full bg-[#969696]" />
      <span className="ml-[19px] w-[209px]">未连接</span>
      <span className={bar} />
      <span className="w-[47px]" />
      <span className={bar} />
      <div className="ml-auto flex h-6 w-[187px] items-center border-l border-[#ccc] bg-linear-to-b from-[#b4b6b8] to-[#7d8084] pl-[13px]">
        <label htmlFor="zoom" className="w-[39px] leading-4 text-[#6a6c6e]">100%</label>
        <ZoomButton />
        <input
          id="zoom"
          type="range"
          defaultValue="50"
          className="mx-[6px] h-4 w-[88px] appearance-none bg-[linear-gradient(#e4e6e8,#e4e6e8)] bg-[length:100%_1px] bg-center bg-no-repeat [&::-webkit-slider-thumb]:h-[13px] [&::-webkit-slider-thumb]:w-[9px] [&::-webkit-slider-thumb]:appearance-none [&::-webkit-slider-thumb]:rounded-b-full [&::-webkit-slider-thumb]:border [&::-webkit-slider-thumb]:border-[#333] [&::-webkit-slider-thumb]:bg-[#dcdee0]"
        />
        <ZoomButton plus />
      </div>
    </footer>
  );
}

/* ---------- windows taskbar ---------- */
const NetEase = ({ size }) => (
  <Svg w={size} h={size} box="0 0 32 32">
    <rect width="32" height="32" rx="5" fill="#dd1420" />
    <path d="M13 9C9 10.500 6.500 14 6.500 18c0 5 4 8.500 9.500 8.500s9.500-3.500 9.500-8.500c0-4-3-7-7.500-7-3.500 0-6 2.200-6 5.200 0 4.300 6.500 4.600 6.300.500L16.500 9c-.5-3.500 2.500-4.500 5-2.500" stroke="#fff" strokeWidth="2.300" strokeLinecap="round" />
  </Svg>
);
const GreenE = ({ size }) => (
  <Svg w={size} h={size} box="0 0 32 32">
    <circle cx="16" cy="16" r="14" fill="#5fc431" stroke="#eafbe0" strokeWidth="2" />
    <path d="M8 16.500h16c0-11-16-11-16 0 0 9 12 10 15 4" stroke="#fff" strokeWidth="4" />
    <path d="M24 2l6-1-7 5z" fill="#8fe05c" />
  </Svg>
);
const IeIcon = () => (
  <Svg w={32} h={32}>
    <path d="M7 17h19c0-12-18-13-18 0 0 11 13 12 17 4" stroke="#4cc1f3" strokeWidth="5" />
    <path d="M5 29C-3 24 12 2 26 2c5 0 4 5 2 8 1-4 0-6-4-5C13 7 2 23 5 27c2 2 6 0 8-1-3 2-6 4-8 3z" fill="#f8c828" />
  </Svg>
);
const StartOrb = () => (
  <Svg w={38} h={38}>
    <defs>
      <radialGradient id="orb" cx=".5" cy=".75" r=".7">
        <stop offset="0" stopColor="#3fb2d8" />
        <stop offset=".6" stopColor="#24608e" />
        <stop offset="1" stopColor="#6f96b4" />
      </radialGradient>
    </defs>
    <circle cx="19" cy="19" r="18" fill="url(#orb)" stroke="#38546c" />
    <path d="M4 14a16 14 0 0 1 30 0c-8 4-20 4-30 0z" fill="#fff" opacity=".3" />
    <path d="M10 11c3-2 6-1.500 8.500 0l-2 8c-2.500-1.500-5-2-8.500-.500z" fill="#ea5a24" />
    <path d="M20 11.500c3 1.500 5.500 1.500 9 0l-2.500 8c-3 1.500-5.500 1.500-8.500 0z" fill="#8cc63e" />
    <path d="M7.500 20.500c3-1.500 6-1 8.500.500l-2 7.500c-2.500-1.500-5-2-8.500-.500z" fill="#3f8ee0" />
    <path d="M17.500 21.500c3 1.500 5.500 1.500 8.500 0l-2 7.500c-3 1.500-5.500 1.500-8.500 0z" fill="#fcc924" />
  </Svg>
);
const ExplorerIcon = () => (
  <Svg w={34} h={32}>
    <path d="M2 5l6-3 6 2 8-1 7 2v23H2z" fill="#e3b94a" stroke="#a98628" />
    <path d="M5 5h6v4H5zM13 6h6v4h-6zM21 7h6v4h-6z" fill="#fff" />
    <path d="M5 4h4v2H5z" fill="#3a9a3c" />
    <path d="M22 6h4v2h-4z" fill="#3c80d0" />
    <path d="M1 10h30v18H1z" fill="#f8e6a0" stroke="#c9a646" />
    <path d="M7 31V21c0-2 1-3 3-3h13c2 0 3 1 3 3v10h-5v-7h-9v7z" fill="#8fd0ee" stroke="#4b9cc8" />
  </Svg>
);
const PlayerIcon = () => (
  <Svg w={28} h={26}>
    <path d="M6 1h20v23H6z" fill="#6cb4dc" stroke="#3c7ca8" />
    <path d="M1 2h20v22H1z" fill="#a9d6ee" stroke="#4b8cb4" />
    <circle cx="12" cy="13" r="9" fill="#f07818" stroke="#fff" />
    <path d="M9 8l8 5-8 5z" fill="#fff" />
  </Svg>
);

const TaskButton = ({ label, children, className = "" }) => (
  <button
    aria-label={label}
    className={`flex h-[38px] w-[58px] shrink-0 items-center justify-center rounded-sm ${className}`}
  >
    {children}
  </button>
);

function Taskbar() {
  const running = "border border-white/60 bg-linear-to-br from-white/35 via-white/10 to-white/20";
  return (
    <div className={`flex h-10 shrink-0 items-center border-t border-[#8da2b4] bg-[linear-gradient(90deg,#0a1118_0%,#101c2a_14%,#1b3348_26%,#2d4d68_36%,#3a5f7f_50%,#25425c_62%,#56748f_73%,#4c6884_80%,#2c4660_90%,#29415a_100%)] pl-2 text-[12px] leading-4 text-white ${uiFont}`}>
      <button aria-label="开始" className="shrink-0"><StartOrb /></button>
      <div className="ml-[14px] flex items-center gap-1">
        <TaskButton label="Internet Explorer"><IeIcon /></TaskButton>
        <TaskButton label="资源管理器" className={running}><ExplorerIcon /></TaskButton>
        <TaskButton label="媒体播放器"><PlayerIcon /></TaskButton>
        <TaskButton label="网易云音乐"><NetEase size={32} /></TaskButton>
        <TaskButton label="浏览器" className={running}><GreenE size={30} /></TaskButton>
        <TaskButton label="STEP 7" className="border border-white/70 bg-linear-to-br from-[#dfe5ea] to-[#8797a6]"><StepIcon size={32} /></TaskButton>
      </div>

      <div className="ml-auto flex shrink-0 items-center">
        <span className="mr-[6px] flex size-4 items-center justify-center border border-white bg-[#2286dc]">
          <PawIcon color="#fff" size={12} />
        </span>
        <Svg w={16} h={16} className="mr-[13px]">
          <circle cx="8" cy="8" r="7" fill="#1022a0" stroke="#b8c0d8" />
          <path d="M5.500 6a2.500 2.500 0 1 1 3.600 2.200c-.800.400-1.100.800-1.100 1.600M8 11v1.500" stroke="#fff" strokeWidth="1.600" />
        </Svg>
        <Svg w={9} h={18} className="mr-[22px]">
          <path d="M2.500.5h6v4h-6zM.5 3.500h5v3h-5z" stroke="#fff" fill="#3b5670" />
          <path d="M1 14h6l-3 3z" fill="#fff" />
        </Svg>
        <div className="mr-[18px] w-[50px] text-center whitespace-nowrap">
          <div>55℃</div>
          <div>CPU温度</div>
        </div>
        <div className="flex items-center gap-2">
          <Svg>
            <circle cx="8" cy="5" r="4" fill="#d9b8a0" />
            <path d="M4 5c0-6 8-6 8 0" stroke="#8a6a5a" strokeWidth="2" />
            <path d="M1 15c1-6 13-6 14 0z" fill="#4f9a90" />
            <circle cx="6" cy="10" r="3" fill="#fff" />
          </Svg>
          <GreenE size={16} />
          <Svg>
            <path d="M8 .5c2 1.500 4.500 2 6.500 2 0 6-1 10-6.500 13C2.500 12.500 1.500 8.500 1.500 2.500c2 0 4.500-.500 6.500-2z" fill="#5fae2c" stroke="#e8f0e0" />
            <path d="M9 3L5 8.500h2.500L7 12.500l4-5.500H8.500z" fill="#fff" />
          </Svg>
          <Svg>
            <path d="M1 14C5 9 9 4 13 1c-1 4-1 8 2 13-4-3-9-3-14 0z" fill="#8b9296" stroke="#40484e" strokeWidth=".600" />
          </Svg>
          <Svg>
            <rect width="16" height="16" fill="#24249c" />
            <text x="1" y="8" fontSize="8" fill="#fff" fontFamily="Liberation Sans">Cfle</text>
            <text x="6" y="15" fontSize="7" fill="#b8c4ff" fontFamily="Liberation Sans">ES</text>
            <circle cx="3" cy="13" r="2" fill="#fff" stroke="#3a9a9a" />
          </Svg>
          <NetEase size={16} />
          <Svg>
            <path d="M9 1h5v4H9z" fill="#7a8c74" />
            <path d="M3 4h4v5H3z" fill="#4f90e0" />
            <path d="M1 10h7v4H1z" fill="#a9c8ec" stroke="#3c74bc" />
            <path d="M11 8v4h-2M12 8h2" stroke="#6aa4e8" />
          </Svg>
          <Svg>
            <rect x="2" width="12" height="16" rx="6" fill="#17417c" />
            <path d="M5 5l6 6-3 3V2l3 3-6 6" stroke="#fff" strokeWidth="1.200" />
          </Svg>
          <Svg>
            <path d="M2.500 2.500h6v12h-6zM4 1h3" stroke="#fff" strokeWidth="1.500" />
            <path d="M8 5h6v4c0 2-1 2-3 2v3M9.500 5V2M12.500 5V2" stroke="#fff" strokeWidth="1.500" fill="#fff" />
          </Svg>
          <Svg>
            <path d="M4.500 4.500h11v8h-11zM7 15h6M1 1v4h3V1M2.500 5v9" stroke="#e4e8ec" />
            <path d="M8 8l7 7M15 8l-7 7" stroke="#d81818" strokeWidth="2.200" />
          </Svg>
        </div>
        <div className="mr-[9px] ml-[15px] w-[60px] text-center">
          <div>9:04</div>
          <div>2019/7/15</div>
        </div>
        <button aria-label="显示桌面" className="mr-px h-[38px] w-[13px] border border-[#8da2b4] bg-linear-to-b from-[#6a7f94] to-[#2c4156]" />
      </div>
    </div>
  );
}

function ImeBar() {
  return (
    <div className="absolute right-[343px] bottom-[43px] z-30 flex h-7 w-[149px] items-center justify-between rounded bg-[#fafcfd] px-[6px]">
      <PawIcon />
      <span className="text-[16px] leading-4 font-bold text-[#2088d8]">中</span>
      <Svg w={14} h={14}><path d="M9 1c5 4 4 12-3 12-2 0-4-1-5-2 5 0 9-4 8-10z" fill="#2088d8" /></Svg>
      <Svg w={14} h={14}>
        <circle cx="3" cy="4" r="2" stroke="#2088d8" strokeWidth="1.500" />
        <path d="M8 8a2.200 2.200 0 1 1 3 2l-2 3h-1c1-1 1.500-2 1.500-3A2 2 0 0 1 8 8z" fill="#2088d8" stroke="#2088d8" />
      </Svg>
      <Svg w={14} h={14}>
        <circle cx="7" cy="4" r="3.500" fill="#a2caec" />
        <path d="M0 14c0-7 14-7 14 0z" fill="#a2caec" />
      </Svg>
      <Svg w={16} h={16}>
        <circle cx="8" cy="8" r="4.500" stroke="#2088d8" strokeWidth="3" />
        <circle cx="8" cy="8" r="6.500" stroke="#2088d8" strokeWidth="2" strokeDasharray="2.600 2.500" />
      </Svg>
    </div>
  );
}

export default function App() {
  return (
    <div className={`relative flex h-screen flex-col overflow-hidden bg-[#525252] ${uiFont}`}>
      <TitleBar />
      <MenuBar />
      <button
        aria-label="应用程序菜单"
        className="absolute top-[2px] left-[3px] z-10 flex size-[38px] items-center justify-center rounded-full border-2 border-[#e9ebec] bg-linear-to-b from-[#f3f4f5] to-[#a5a9ad] shadow-[0_0_0_1px_#6b7074]"
      >
        <StepIcon size={25} />
      </button>
      <Ribbon />
      <main className="flex min-h-0 flex-1">
        <ProjectTree />
        <div className="ml-[5px] flex min-w-0 flex-1 flex-col">
          <Editor />
          <BottomPanels />
        </div>
      </main>
      <StatusBar />
      <Taskbar />
      <SystemBlockDialog />
      <ImeBar />
    </div>
  );
}
